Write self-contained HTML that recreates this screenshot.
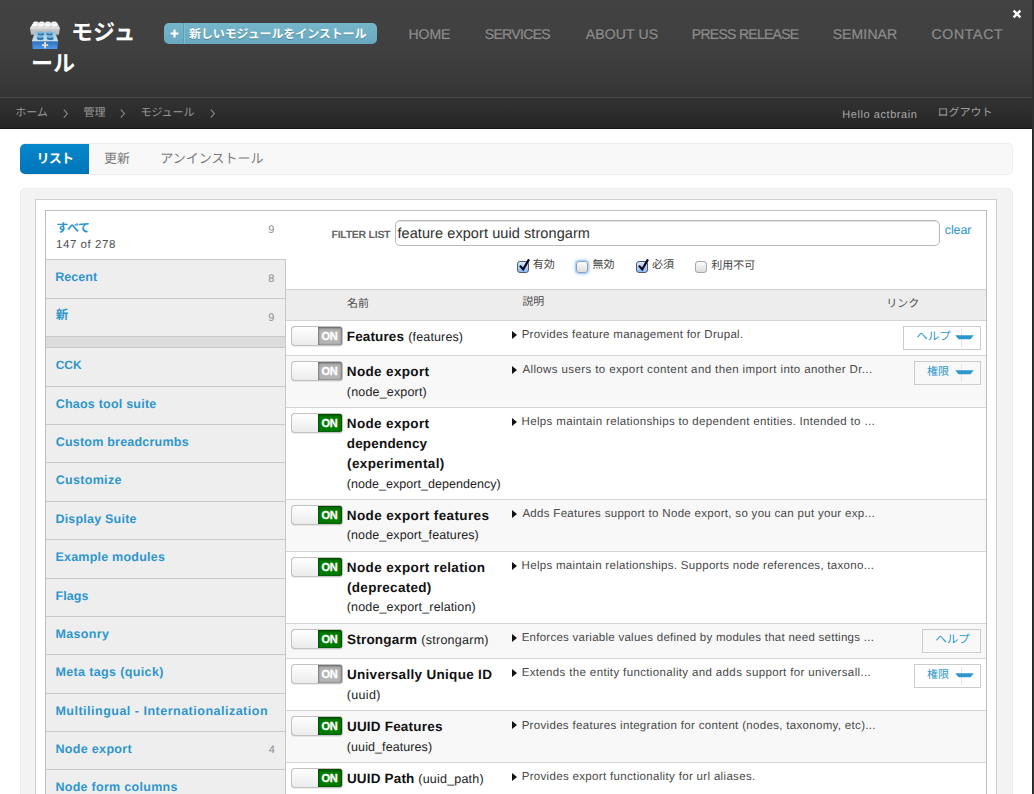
<!DOCTYPE html>
<html><head><meta charset="utf-8"><title>Modules</title>
<style>
html,body{margin:0;padding:0}
body{width:1034px;height:794px;overflow:hidden;position:relative;background:#fff;font-family:'Liberation Sans', sans-serif}
.a{position:absolute}
.t{position:absolute;white-space:pre;line-height:1;text-rendering:geometricPrecision;font-family:'Liberation Sans', sans-serif}
.j{font-family:'Liberation Sans','Noto Sans CJK JP',sans-serif}
svg{position:absolute;overflow:visible}
.tg{position:absolute;width:50px;height:18px;border:1px solid #c2c2c2;border-radius:3.5px;overflow:hidden;background:#aaa;box-shadow:0 1px 0 rgba(0,0,0,.07)}
.tg i{position:absolute;left:0;top:0;width:26px;height:18px;background:linear-gradient(#ffffff,#ebebeb);border-radius:2.5px 0 0 2.5px}
.tg b{position:absolute;left:26px;top:0;width:24px;height:18px;background:#b4b4b4;box-shadow:inset 0 1px 3px rgba(0,0,0,.45),inset 0 0 2px rgba(0,0,0,.35)}
.tg.on b{background:#007a00;box-shadow:inset 0 1px 3px rgba(0,30,0,.6),inset 0 0 2px rgba(0,30,0,.5)}
.tg u{position:absolute;left:29.4px;top:4px;font:bold 11px/11px 'Liberation Sans', sans-serif;color:#fff;text-decoration:none;letter-spacing:-0.3px;-webkit-text-stroke:0.35px #fff}
.row{position:absolute;left:286px;width:700px;border-top:1px solid #d4d4d4}
.sb{position:absolute;left:46px;width:239px;background:#eee;border-top:1px solid #c8c8c8}
.btn{position:absolute;border:1px solid #ccc;box-sizing:border-box}
.arr{position:absolute;width:0;height:0;border-left:5px solid #111;border-top:4px solid transparent;border-bottom:4px solid transparent}
</style></head><body>

<div class="a" style="left:0;top:0;width:1034px;height:97px;background:linear-gradient(#424242 0%,#404040 50%,#353535 100%)"></div>
<div class="a" style="left:0;top:97px;width:1034px;height:1px;background:#4b4b4b"></div>
<div class="a" style="left:0;top:98px;width:1034px;height:30px;background:linear-gradient(#333333,#252525)"></div>
<div class="a" style="left:0;top:128px;width:1034px;height:1px;background:#151515"></div>
<div class="a" style="left:1032px;top:0;width:2px;height:129px;background:#303030"></div>
<div class="a" style="left:1032px;top:129px;width:1px;height:665px;background:#242424"></div>
<div class="a" style="left:1033px;top:129px;width:1px;height:665px;background:#3a3a3a"></div>
<svg style="left:26px;top:18px" width="40" height="36" viewBox="0 0 40 36"><defs><linearGradient id="g1" x1="0" y1="0" x2="0" y2="1"><stop offset="0" stop-color="#cecece"/><stop offset="1" stop-color="#b5b5b5"/></linearGradient><linearGradient id="g2" x1="0" y1="0" x2="0" y2="1"><stop offset="0" stop-color="#2d6bb3"/><stop offset="1" stop-color="#4d9cf2"/></linearGradient><linearGradient id="g3" x1="0" y1="0" x2="0" y2="1"><stop offset="0" stop-color="#8dbfd8"/><stop offset="1" stop-color="#cfe4ee"/></linearGradient><linearGradient id="g4" x1="0" y1="0" x2="0" y2="1"><stop offset="0" stop-color="#f1f1f1"/><stop offset="1" stop-color="#e4e4e4"/></linearGradient></defs><path d="M7.3 4.7 L31.2 4.7 L33.9 9.9 L4 9.9 Z" fill="url(#g4)"/><path d="M7.35 4.45 v0.80 a2.55 1.05 0 0 0 5.10 0 v-0.80z" fill="#dedede"/><ellipse cx="9.90" cy="4.45" rx="2.55" ry="1.05" fill="#fafafa"/><path d="M13.25 4.45 v0.80 a2.55 1.05 0 0 0 5.10 0 v-0.80z" fill="#dedede"/><ellipse cx="15.80" cy="4.45" rx="2.55" ry="1.05" fill="#fafafa"/><path d="M19.35 4.45 v0.80 a2.55 1.05 0 0 0 5.10 0 v-0.80z" fill="#dedede"/><ellipse cx="21.90" cy="4.45" rx="2.55" ry="1.05" fill="#fafafa"/><path d="M25.45 4.45 v0.80 a2.55 1.05 0 0 0 5.10 0 v-0.80z" fill="#dedede"/><ellipse cx="28.00" cy="4.45" rx="2.55" ry="1.05" fill="#fafafa"/><ellipse cx="9.60" cy="8.35" rx="2.80" ry="1.15" fill="#bdbdbd"/><path d="M5.90 7.20 v0.90 a2.80 1.15 0 0 0 5.60 0 v-0.90z" fill="#e0e0e0"/><ellipse cx="8.70" cy="7.20" rx="2.80" ry="1.15" fill="#fcfcfc"/><ellipse cx="16.20" cy="8.35" rx="2.80" ry="1.15" fill="#bdbdbd"/><path d="M12.50 7.20 v0.90 a2.80 1.15 0 0 0 5.60 0 v-0.90z" fill="#e0e0e0"/><ellipse cx="15.30" cy="7.20" rx="2.80" ry="1.15" fill="#fcfcfc"/><ellipse cx="22.80" cy="8.35" rx="2.80" ry="1.15" fill="#bdbdbd"/><path d="M19.10 7.20 v0.90 a2.80 1.15 0 0 0 5.60 0 v-0.90z" fill="#e0e0e0"/><ellipse cx="21.90" cy="7.20" rx="2.80" ry="1.15" fill="#fcfcfc"/><ellipse cx="29.60" cy="8.35" rx="2.80" ry="1.15" fill="#bdbdbd"/><path d="M25.90 7.20 v0.90 a2.80 1.15 0 0 0 5.60 0 v-0.90z" fill="#e0e0e0"/><ellipse cx="28.70" cy="7.20" rx="2.80" ry="1.15" fill="#fcfcfc"/><path d="M4 9.9 L33.9 9.9 L32.9 16.7 L5 16.7 Z" fill="url(#g1)"/><path d="M4 9.9 H33.9 V10.5 H4Z" fill="#e9e9e9"/><path d="M9 13.8 L29 13.8 L32.2 22.9 L5.9 22.9 Z" fill="url(#g3)"/><ellipse cx="15.60" cy="16.45" rx="2.90" ry="1.30" fill="#5e9cc4"/><path d="M11.80 14.50 v1.70 a2.90 1.30 0 0 0 5.80 0 v-1.70z" fill="#2c74b6"/><ellipse cx="14.70" cy="14.50" rx="2.90" ry="1.30" fill="#7fb6d6"/><ellipse cx="24.20" cy="16.45" rx="2.90" ry="1.30" fill="#5e9cc4"/><path d="M20.40 14.50 v1.70 a2.90 1.30 0 0 0 5.80 0 v-1.70z" fill="#2c74b6"/><ellipse cx="23.30" cy="14.50" rx="2.90" ry="1.30" fill="#7fb6d6"/><ellipse cx="14.90" cy="20.75" rx="3.10" ry="1.45" fill="#6aa5c9"/><path d="M10.90 18.60 v1.90 a3.10 1.45 0 0 0 6.20 0 v-1.90z" fill="#2c74b6"/><ellipse cx="14.00" cy="18.60" rx="3.10" ry="1.45" fill="#7db4d5"/><ellipse cx="24.90" cy="20.75" rx="3.10" ry="1.45" fill="#6aa5c9"/><path d="M20.90 18.60 v1.90 a3.10 1.45 0 0 0 6.20 0 v-1.90z" fill="#2c74b6"/><ellipse cx="24.00" cy="18.60" rx="3.10" ry="1.45" fill="#7db4d5"/><path d="M5.9 22.9 L32.2 22.9 L31.3 31 L6.8 31 Z" fill="url(#g2)"/><path d="M5.9 22.9 H32.2 V23.5 H5.9Z" fill="#b9d6e6" opacity=".7"/><path d="M18.1 24.0h1.9v2.15h2.15v1.9h-2.15v2.15h-1.9v-2.15h-2.15v-1.9h2.15z" fill="#e2ded6"/></svg>
<div class="t j" style="left:71px;top:22px;font-size:22px;font-weight:700;color:#fff;">モジュ</div>
<div class="t j" style="left:31px;top:53px;font-size:22px;font-weight:700;color:#fff;">ール</div>
<div class="a" style="left:164px;top:23px;width:213px;height:21px;border-radius:5px;background:linear-gradient(#76b6cb,#68a9c0)"></div>
<div class="a" style="left:183px;top:23px;width:1px;height:21px;background:#5f9fb6"></div>
<div class="a" style="left:184px;top:23px;width:1px;height:21px;background:#7fbdd1"></div>
<svg style="left:170px;top:29px" width="9" height="9" viewBox="0 0 9 9"><path d="M3.4 0.6h2.2v2.8h2.8v2.2h-2.8v2.8h-2.2v-2.8h-2.8v-2.2h2.8z" fill="#fff"/></svg>
<div class="t j" style="left:189px;top:27.7px;font-size:12px;font-weight:700;color:#fff;letter-spacing:-0.1px;text-shadow:0 1px 0 rgba(40,90,110,.5);">新しいモジュールをインストール</div>
<svg style="left:1012px;top:9px" width="10" height="10" viewBox="0 0 10 10"><path d="M1.6 1.6L8.4 8.4M8.4 1.6L1.6 8.4" stroke="#fff" stroke-width="2.3" fill="none"/></svg>
<div class="t j" style="left:15.2px;top:108.2px;font-size:11px;font-weight:400;color:#9a9a9a;">ホーム</div>
<div class="t j" style="left:83.5px;top:108px;font-size:11px;font-weight:400;color:#9a9a9a;">管理</div>
<div class="t j" style="left:140.4px;top:108.2px;font-size:11px;font-weight:400;color:#9a9a9a;">モジュール</div>
<svg style="left:62.9px;top:109.4px" width="6" height="10" viewBox="0 0 6 10"><path d="M0.8 0.6L4.4 4.6L0.8 8.6" stroke="#8a8a8a" stroke-width="1.1" fill="none"/></svg>
<svg style="left:120.2px;top:109.4px" width="6" height="10" viewBox="0 0 6 10"><path d="M0.8 0.6L4.4 4.6L0.8 8.6" stroke="#8a8a8a" stroke-width="1.1" fill="none"/></svg>
<svg style="left:210.0px;top:109.4px" width="6" height="10" viewBox="0 0 6 10"><path d="M0.8 0.6L4.4 4.6L0.8 8.6" stroke="#8a8a8a" stroke-width="1.1" fill="none"/></svg>
<div class="t j" style="left:937.5px;top:108.3px;font-size:11px;font-weight:400;color:#a0a0a0;">ログアウト</div>
<div class="a" style="left:20px;top:143px;width:991px;height:30px;border:1px solid #eeeeee;border-radius:5px;background:#f8f8f8"></div>
<div class="a" style="left:20px;top:144px;width:69px;height:30px;border-radius:5px 0 0 5px;background:linear-gradient(#0687cc,#0075b8)"></div>
<div class="t j" style="left:36.5px;top:152.4px;font-size:13px;font-weight:700;color:#fff;letter-spacing:-0.7px;">リスト</div>
<div class="t j" style="left:104px;top:152.2px;font-size:13px;font-weight:400;color:#7a7a7a;">更新</div>
<div class="t j" style="left:160.3px;top:152.4px;font-size:13px;font-weight:400;color:#7a7a7a;">アンインストール</div>
<div class="a" style="left:20px;top:188px;width:991px;height:640px;border:1px solid #ececec;border-radius:5px;background:#f3f3f3"></div>
<div class="a" style="left:35px;top:199px;width:960px;height:640px;border:1px solid #cfcfcf;background:#fff"></div>
<div class="a" style="left:45px;top:210px;width:940px;height:640px;border:1px solid #bdbdbd;background:#fff"></div>
<div class="sb" style="top:259px;height:38px"></div>
<div class="sb" style="top:298px;height:37px"></div>
<div class="sb" style="top:336px;height:10px"></div>
<div class="sb" style="top:347px;height:38px"></div>
<div class="sb" style="top:386px;height:37px"></div>
<div class="sb" style="top:424px;height:37px"></div>
<div class="sb" style="top:462px;height:38px"></div>
<div class="sb" style="top:501px;height:37px"></div>
<div class="sb" style="top:539px;height:38px"></div>
<div class="sb" style="top:578px;height:37px"></div>
<div class="sb" style="top:616px;height:37px"></div>
<div class="sb" style="top:654px;height:38px"></div>
<div class="sb" style="top:693px;height:37px"></div>
<div class="sb" style="top:731px;height:37px"></div>
<div class="sb" style="top:769px;height:38px"></div>
<div class="a" style="left:46px;top:337px;width:239px;height:10px;background:#dcdcdc"></div>
<div class="a" style="left:285px;top:259px;width:1px;height:560px;background:#c8c8c8"></div>
<div class="t j" style="left:56.2px;top:221.6px;font-size:12px;font-weight:700;color:#2d96cd;letter-spacing:-0.4px;">すべて</div>
<div class="t j" style="left:55.8px;top:309.2px;font-size:12.5px;font-weight:700;color:#2d96cd;">新</div>
<div class="a" style="left:395px;top:220px;width:543px;height:24px;border:1px solid #b9b9b9;border-radius:5px;background:#fff;box-shadow:inset 0 1px 1px rgba(0,0,0,.12)"></div>
<div class="a" style="left:517px;top:261px;width:10px;height:10px;border:1px solid #4a5a78;border-radius:3px;background:linear-gradient(#dbe8fb,#8fbaf0)"></div>
<svg style="left:517px;top:258px" width="14" height="15" viewBox="0 0 14 15"><path d="M2.9 7.6L6.2 11.4L12 1.4" stroke="#0a0a1e" stroke-width="2.2" fill="none" stroke-linejoin="miter"/></svg>
<div class="a" style="left:576px;top:261px;width:10px;height:10px;border:1px solid #8aa0bd;border-radius:3px;background:linear-gradient(#fdfdfd,#dcdcdc);box-shadow:0 0 2.5px 1px rgba(90,160,240,.7);"></div>
<div class="a" style="left:636px;top:261px;width:10px;height:10px;border:1px solid #4a5a78;border-radius:3px;background:linear-gradient(#dbe8fb,#8fbaf0)"></div>
<svg style="left:636px;top:258px" width="14" height="15" viewBox="0 0 14 15"><path d="M2.9 7.6L6.2 11.4L12 1.4" stroke="#0a0a1e" stroke-width="2.2" fill="none" stroke-linejoin="miter"/></svg>
<div class="a" style="left:695px;top:261px;width:10px;height:10px;border:1px solid #a6a6a6;border-radius:3px;background:linear-gradient(#fdfdfd,#dcdcdc);"></div>
<div class="t j" style="left:532.8px;top:260.1px;font-size:11px;font-weight:400;color:#444;">有効</div>
<div class="t j" style="left:592.6px;top:260.1px;font-size:11px;font-weight:400;color:#444;">無効</div>
<div class="t j" style="left:652.1px;top:260.4px;font-size:11px;font-weight:400;color:#444;">必須</div>
<div class="t j" style="left:711.2px;top:261.2px;font-size:11px;font-weight:400;color:#444;">利用不可</div>
<div class="a" style="left:286px;top:289px;width:700px;height:31px;background:#ededed;border-top:1px solid #d0d0d0;box-sizing:border-box"></div>
<div class="t j" style="left:346.9px;top:299.1px;font-size:11px;font-weight:400;color:#4d4d4d;">名前</div>
<div class="t j" style="left:522.3px;top:297.2px;font-size:11px;font-weight:400;color:#4d4d4d;">説明</div>
<div class="t j" style="left:886.3px;top:299.1px;font-size:11px;font-weight:400;color:#4d4d4d;">リンク</div>
<div class="row" style="top:320px;height:34px;background:#fff"></div>
<div class="tg" style="left:291px;top:326px"><b></b><i></i><u>ON</u></div>
<div class="arr" style="left:512px;top:331.2px"></div>
<div class="row" style="top:355px;height:51px;background:#f8f8f8"></div>
<div class="tg" style="left:291px;top:361px"><b></b><i></i><u>ON</u></div>
<div class="arr" style="left:512px;top:366.2px"></div>
<div class="row" style="top:407px;height:91px;background:#fff"></div>
<div class="tg on" style="left:291px;top:413px"><b></b><i></i><u>ON</u></div>
<div class="arr" style="left:512px;top:418.2px"></div>
<div class="row" style="top:499px;height:51px;background:#f8f8f8"></div>
<div class="tg on" style="left:291px;top:505px"><b></b><i></i><u>ON</u></div>
<div class="arr" style="left:512px;top:510.2px"></div>
<div class="row" style="top:551px;height:71px;background:#fff"></div>
<div class="tg on" style="left:291px;top:557px"><b></b><i></i><u>ON</u></div>
<div class="arr" style="left:512px;top:562.2px"></div>
<div class="row" style="top:623px;height:34px;background:#f8f8f8"></div>
<div class="tg on" style="left:291px;top:629px"><b></b><i></i><u>ON</u></div>
<div class="arr" style="left:512px;top:634.2px"></div>
<div class="row" style="top:658px;height:51px;background:#fff"></div>
<div class="tg" style="left:291px;top:664px"><b></b><i></i><u>ON</u></div>
<div class="arr" style="left:512px;top:669.2px"></div>
<div class="row" style="top:710px;height:51px;background:#f8f8f8"></div>
<div class="tg on" style="left:291px;top:716px"><b></b><i></i><u>ON</u></div>
<div class="arr" style="left:512px;top:721.2px"></div>
<div class="row" style="top:762px;height:37px;background:#fff"></div>
<div class="tg on" style="left:291px;top:768px"><b></b><i></i><u>ON</u></div>
<div class="arr" style="left:512px;top:773.2px"></div>
<div class="btn" style="left:903px;top:326px;width:78px;height:24px"></div>
<div class="t j" style="left:916.2px;top:331.5px;font-size:11.5px;font-weight:400;color:#2d96cd;">ヘルプ</div>
<div class="a" style="left:961px;top:329px;width:1px;height:18px;background:#e4e4e4"></div>
<svg style="left:955px;top:335.2px" width="19" height="5" viewBox="0 0 19 5"><path d="M0.3 0.2H18.7L15.5 4.3H3.5Z" fill="#2d96cd"/></svg>
<div class="btn" style="left:914px;top:361px;width:67px;height:24px"></div>
<div class="t j" style="left:927px;top:367.1px;font-size:11px;font-weight:400;color:#2d96cd;">権限</div>
<div class="a" style="left:961px;top:364px;width:1px;height:18px;background:#e4e4e4"></div>
<svg style="left:955px;top:370.2px" width="19" height="5" viewBox="0 0 19 5"><path d="M0.3 0.2H18.7L15.5 4.3H3.5Z" fill="#2d96cd"/></svg>
<div class="btn" style="left:922px;top:629px;width:59px;height:24px"></div>
<div class="t j" style="left:935.2px;top:634.5px;font-size:11.5px;font-weight:400;color:#2d96cd;">ヘルプ</div>
<div class="btn" style="left:914px;top:664px;width:67px;height:24px"></div>
<div class="t j" style="left:927px;top:670.1px;font-size:11px;font-weight:400;color:#2d96cd;">権限</div>
<div class="a" style="left:961px;top:667px;width:1px;height:18px;background:#e4e4e4"></div>
<svg style="left:955px;top:673.2px" width="19" height="5" viewBox="0 0 19 5"><path d="M0.3 0.2H18.7L15.5 4.3H3.5Z" fill="#2d96cd"/></svg>
<div class="t" style="left:408.46px;top:27px;font-size:14px;font-weight:400;color:#8d8d8d;letter-spacing:-0.032px;text-shadow:0 1px 0 #2a2a2a;-webkit-text-stroke:0.3px #8d8d8d;">HOME</div>
<div class="t" style="left:484.76px;top:27px;font-size:14px;font-weight:400;color:#8d8d8d;letter-spacing:-0.664px;text-shadow:0 1px 0 #2a2a2a;-webkit-text-stroke:0.3px #8d8d8d;">SERVICES</div>
<div class="t" style="left:585.78px;top:27px;font-size:14px;font-weight:400;color:#8d8d8d;letter-spacing:0.13px;text-shadow:0 1px 0 #2a2a2a;-webkit-text-stroke:0.3px #8d8d8d;">ABOUT US</div>
<div class="t" style="left:691.86px;top:27px;font-size:14px;font-weight:400;color:#8d8d8d;letter-spacing:-0.717px;text-shadow:0 1px 0 #2a2a2a;-webkit-text-stroke:0.3px #8d8d8d;">PRESS RELEASE</div>
<div class="t" style="left:832.66px;top:27px;font-size:14px;font-weight:400;color:#8d8d8d;letter-spacing:0.124px;text-shadow:0 1px 0 #2a2a2a;-webkit-text-stroke:0.3px #8d8d8d;">SEMINAR</div>
<div class="t" style="left:931.42px;top:27px;font-size:14px;font-weight:400;color:#8d8d8d;letter-spacing:0.755px;text-shadow:0 1px 0 #2a2a2a;-webkit-text-stroke:0.3px #8d8d8d;">CONTACT</div>
<div class="t" style="left:842.2px;top:110px;font-size:11px;font-weight:400;color:#a8a8a8;letter-spacing:0.573px;">Hello actbrain</div>
<div class="t" style="left:55.95px;top:240px;font-size:11.5px;font-weight:400;color:#505050;letter-spacing:0.573px;">147 of 278</div>
<div class="t" style="left:268.37px;top:225px;font-size:11px;font-weight:400;color:#8c8c8c;letter-spacing:0px;">9</div>
<div class="t" style="left:55.2px;top:271px;font-size:12.5px;font-weight:700;color:#2d96cd;letter-spacing:0.045px;">Recent</div>
<div class="t" style="left:268.37px;top:274px;font-size:11px;font-weight:400;color:#8c8c8c;letter-spacing:0px;">8</div>
<div class="t" style="left:268.37px;top:313px;font-size:11px;font-weight:400;color:#8c8c8c;letter-spacing:0px;">9</div>
<div class="t" style="left:55.84px;top:360px;font-size:11.9px;font-weight:700;color:#2d96cd;letter-spacing:-0.063px;">CCK</div>
<div class="t" style="left:55.67px;top:398px;font-size:12.5px;font-weight:700;color:#2d96cd;letter-spacing:0.225px;">Chaos tool suite</div>
<div class="t" style="left:55.67px;top:436px;font-size:12.5px;font-weight:700;color:#2d96cd;letter-spacing:0.22px;">Custom breadcrumbs</div>
<div class="t" style="left:55.67px;top:474px;font-size:12.5px;font-weight:700;color:#2d96cd;letter-spacing:0.322px;">Customize</div>
<div class="t" style="left:55.4px;top:513px;font-size:12.5px;font-weight:700;color:#2d96cd;letter-spacing:0.214px;">Display Suite</div>
<div class="t" style="left:55.4px;top:551px;font-size:12.5px;font-weight:700;color:#2d96cd;letter-spacing:0.23px;">Example modules</div>
<div class="t" style="left:55.4px;top:590px;font-size:12.5px;font-weight:700;color:#2d96cd;letter-spacing:0.126px;">Flags</div>
<div class="t" style="left:55.4px;top:628px;font-size:12.5px;font-weight:700;color:#2d96cd;letter-spacing:0.339px;">Masonry</div>
<div class="t" style="left:55.4px;top:666px;font-size:12.5px;font-weight:700;color:#2d96cd;letter-spacing:0.37px;">Meta tags (quick)</div>
<div class="t" style="left:55.4px;top:705px;font-size:12.5px;font-weight:700;color:#2d96cd;letter-spacing:0.5px;">Multilingual - Internationalization</div>
<div class="t" style="left:55.4px;top:743px;font-size:12.5px;font-weight:700;color:#2d96cd;letter-spacing:0.339px;">Node export</div>
<div class="t" style="left:55.4px;top:781px;font-size:12.5px;font-weight:700;color:#2d96cd;letter-spacing:0.293px;">Node form columns</div>
<div class="t" style="left:268.65px;top:745px;font-size:11px;font-weight:400;color:#8c8c8c;letter-spacing:0px;">4</div>
<div class="t" style="left:331.49px;top:230px;font-size:10.5px;font-weight:700;color:#666;letter-spacing:-0.258px;">FILTER LIST</div>
<div class="t" style="left:397.41px;top:227px;font-size:14.5px;font-weight:400;color:#303030;letter-spacing:0.082px;">feature export uuid strongarm</div>
<div class="t" style="left:944.72px;top:224px;font-size:12.5px;font-weight:400;color:#2d96cd;letter-spacing:-0.087px;">clear</div>
<div class="t" style="left:346.85px;top:330px;font-size:13.5px;font-weight:700;color:#111;letter-spacing:0.127px;">Features</div>
<div class="t" style="left:408.32px;top:331px;font-size:12.5px;font-weight:400;color:#222;letter-spacing:0.136px;">(features)</div>
<div class="t" style="left:346.85px;top:365px;font-size:13.5px;font-weight:700;color:#111;letter-spacing:0.342px;">Node export</div>
<div class="t" style="left:346.82px;top:386px;font-size:12.5px;font-weight:400;color:#222;letter-spacing:0.177px;">(node_export)</div>
<div class="t" style="left:346.85px;top:417px;font-size:13.5px;font-weight:700;color:#111;letter-spacing:0.342px;">Node export</div>
<div class="t" style="left:346.72px;top:437px;font-size:13.5px;font-weight:700;color:#111;letter-spacing:0.182px;">dependency</div>
<div class="t" style="left:347.01px;top:457px;font-size:13.5px;font-weight:700;color:#111;letter-spacing:0.39px;">(experimental)</div>
<div class="t" style="left:346.82px;top:478px;font-size:12.5px;font-weight:400;color:#222;letter-spacing:0.045px;">(node_export_dependency)</div>
<div class="t" style="left:346.85px;top:509px;font-size:13.5px;font-weight:700;color:#111;letter-spacing:0.37px;">Node export features</div>
<div class="t" style="left:346.82px;top:529px;font-size:12.5px;font-weight:400;color:#222;letter-spacing:0.092px;">(node_export_features)</div>
<div class="t" style="left:346.85px;top:561px;font-size:13.5px;font-weight:700;color:#111;letter-spacing:0.367px;">Node export relation</div>
<div class="t" style="left:347.01px;top:581px;font-size:13.5px;font-weight:700;color:#111;letter-spacing:0.304px;">(deprecated)</div>
<div class="t" style="left:346.82px;top:601px;font-size:12.5px;font-weight:400;color:#222;letter-spacing:0.146px;">(node_export_relation)</div>
<div class="t" style="left:346.95px;top:633px;font-size:13.5px;font-weight:700;color:#111;letter-spacing:0.231px;">Strongarm</div>
<div class="t" style="left:421.32px;top:634px;font-size:12.5px;font-weight:400;color:#222;letter-spacing:0.256px;">(strongarm)</div>
<div class="t" style="left:346.93px;top:668px;font-size:13.5px;font-weight:700;color:#111;letter-spacing:0.309px;">Universally Unique ID</div>
<div class="t" style="left:346.82px;top:689px;font-size:12.5px;font-weight:400;color:#222;letter-spacing:0.306px;">(uuid)</div>
<div class="t" style="left:346.93px;top:720px;font-size:13.5px;font-weight:700;color:#111;letter-spacing:0.205px;">UUID Features</div>
<div class="t" style="left:346.82px;top:741px;font-size:12.5px;font-weight:400;color:#222;letter-spacing:0.088px;">(uuid_features)</div>
<div class="t" style="left:346.93px;top:772px;font-size:13.5px;font-weight:700;color:#111;letter-spacing:0.172px;">UUID Path</div>
<div class="t" style="left:418.32px;top:773px;font-size:12.5px;font-weight:400;color:#222;letter-spacing:0.204px;">(uuid_path)</div>
<div class="t" style="left:521.64px;top:330px;font-size:11.5px;font-weight:400;color:#484848;letter-spacing:0.277px;">Provides feature management for Drupal.</div>
<div class="t" style="left:522.38px;top:365px;font-size:11.5px;font-weight:400;color:#484848;letter-spacing:0.391px;">Allows users to export content and then import into another Dr...</div>
<div class="t" style="left:521.58px;top:417px;font-size:11.5px;font-weight:400;color:#484848;letter-spacing:0.342px;">Helps maintain relationships to dependent entities. Intended to ...</div>
<div class="t" style="left:522.38px;top:509px;font-size:11.5px;font-weight:400;color:#484848;letter-spacing:0.305px;">Adds Features support to Node export, so you can put your exp...</div>
<div class="t" style="left:521.58px;top:561px;font-size:11.5px;font-weight:400;color:#484848;letter-spacing:0.301px;">Helps maintain relationships. Supports node references, taxono...</div>
<div class="t" style="left:521.64px;top:633px;font-size:11.5px;font-weight:400;color:#484848;letter-spacing:0.265px;">Enforces variable values defined by modules that need settings ...</div>
<div class="t" style="left:521.64px;top:668px;font-size:11.5px;font-weight:400;color:#484848;letter-spacing:0.36px;">Extends the entity functionality and adds support for universall...</div>
<div class="t" style="left:521.64px;top:721px;font-size:11.5px;font-weight:400;color:#484848;letter-spacing:0.319px;">Provides features integration for content (nodes, taxonomy, etc)...</div>
<div class="t" style="left:521.64px;top:772px;font-size:11.5px;font-weight:400;color:#484848;letter-spacing:0.333px;">Provides export functionality for url aliases.</div>
</body></html>
